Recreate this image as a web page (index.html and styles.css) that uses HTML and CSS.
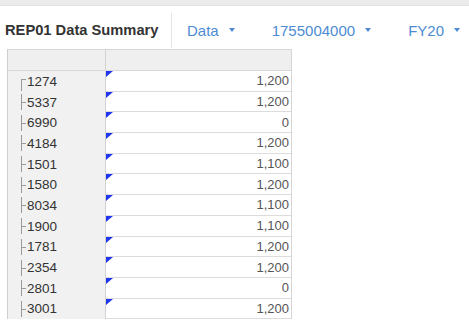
FILE: index.html
```html
<!DOCTYPE html>
<html lang="en">

<head>
    <meta charset="UTF-8">
    <meta name="viewport" content="width=device-width, initial-scale=1.0">
    <title>REP01 Data Summary</title>
    <link rel="stylesheet" href="styles.css">
</head>

<body>
    <div class="topbar"></div>
    <div class="toolbar">
        <div class="title">REP01 Data Summary</div>
        <div class="sep"></div>
        <div class="tab first">Data <span class="caret"></span></div>
        <div class="tab">1755004000 <span class="caret"></span></div>
        <div class="tab">FY20 <span class="caret"></span></div>
    </div>

    <div class="grid">
        <div class="row head">
            <div class="label"></div>
            <div class="value"></div>
        </div>
        <div class="row">
            <div class="label top"><span class="tree"></span>1274</div>
            <div class="value">1,200</div>
        </div>
        <div class="row">
            <div class="label"><span class="tree"></span>5337</div>
            <div class="value">1,200</div>
        </div>
        <div class="row">
            <div class="label"><span class="tree"></span>6990</div>
            <div class="value">0</div>
        </div>
        <div class="row">
            <div class="label"><span class="tree"></span>4184</div>
            <div class="value">1,200</div>
        </div>
        <div class="row">
            <div class="label"><span class="tree"></span>1501</div>
            <div class="value">1,100</div>
        </div>
        <div class="row">
            <div class="label"><span class="tree"></span>1580</div>
            <div class="value">1,200</div>
        </div>
        <div class="row">
            <div class="label"><span class="tree"></span>8034</div>
            <div class="value">1,100</div>
        </div>
        <div class="row">
            <div class="label"><span class="tree"></span>1900</div>
            <div class="value">1,100</div>
        </div>
        <div class="row">
            <div class="label"><span class="tree"></span>1781</div>
            <div class="value">1,200</div>
        </div>
        <div class="row">
            <div class="label"><span class="tree"></span>2354</div>
            <div class="value">1,200</div>
        </div>
        <div class="row">
            <div class="label"><span class="tree"></span>2801</div>
            <div class="value">0</div>
        </div>
        <div class="row">
            <div class="label"><span class="tree"></span>3001</div>
            <div class="value">1,200</div>
        </div>
    </div>
</body>

</html>
```

FILE: styles.css
```css
body {
    margin: 0;
    background-color: #fff;
    font-family: "Liberation Sans", Arial, sans-serif;
    overflow: hidden;
}

.topbar {
    height: 5px;
    background-color: #ececec;
    border-bottom: 1px solid #e2e2e2;
}

.toolbar {
    display: flex;
    align-items: center;
    height: 36px;
    margin-top: 6px;
}

.title {
    font-size: 14.7px;
    font-weight: bold;
    color: #333;
    padding-left: 5px;
    width: 171px;
    box-sizing: border-box;
}

.sep {
    width: 1px;
    height: 35px;
    background-color: #e4e4e4;
    margin-top: 1px;
}

.tab {
    font-size: 15px;
    color: #4d8bd3;
    margin-left: 37px;
    display: flex;
    align-items: center;
}

.tab.first {
    margin-left: 15px;
}

.caret {
    display: inline-block;
    margin-left: 10px;
    border-left: 3.5px solid transparent;
    border-right: 3.5px solid transparent;
    border-top: 4px solid #4d8bd3;
}

.grid {
    margin-left: 7px;
    margin-top: 1px;
    width: 285px;
    border-left: 1px solid #cfcfcf;
    border-right: 1px solid #d6d6d6;
    border-top: 1px solid #d6d6d6;
    box-sizing: border-box;
}

.row {
    display: grid;
    grid-template-columns: 98px 1fr;
    height: 20.7px;
}

.row.head {
    height: 20px;
    background-color: #efefef;
    border-bottom: 1px solid #d8d8d8;
}

.label {
    display: flex;
    align-items: center;
    background-color: #f1f1f1;
    border-right: 1px solid #d2d2d2;
    font-size: 13.5px;
    color: #333;
}

.row.head .label {
    background-color: #efefef;
}

.tree {
    position: relative;
    width: 3px;
    height: 16px;
    margin-left: 13px;
    margin-right: 2px;
    border-left: 1px solid #9a9a9a;
}

.tree::after {
    content: "";
    position: absolute;
    left: 0;
    top: 8px;
    width: 4px;
    border-top: 1px solid #9a9a9a;
}

.label.top .tree {
    height: 12px;
    margin-top: 8px;
}

.label.top .tree::after {
    top: 0;
}

.value {
    position: relative;
    display: flex;
    align-items: center;
    justify-content: flex-end;
    padding-right: 2px;
    border-bottom: 1px solid #dcdcdc;
    font-size: 13px;
    color: #555;
    box-sizing: border-box;
}

.row.head .value {
    border-bottom: none;
}

.row:not(.head) .value::before {
    content: "";
    position: absolute;
    left: 0;
    top: 0;
    border-top: 6px solid #1f35f0;
    border-right: 7px solid transparent;
}
```
